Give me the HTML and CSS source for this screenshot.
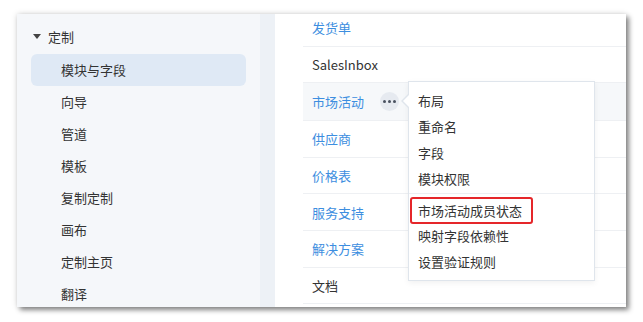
FILE: index.html
```html
<!DOCTYPE html>
<html lang="zh">
<head>
    <meta charset="UTF-8">
    <title>定制 - 模块与字段</title>
    <link rel="stylesheet" href="styles.css">
</head>
<body>
    <div class="frame">
        <div class="sidebar">
            <div class="side-head"><span class="caret"></span>定制</div>
            <div class="side-item selected">模块与字段</div>
            <div class="side-item">向导</div>
            <div class="side-item">管道</div>
            <div class="side-item">模板</div>
            <div class="side-item">复制定制</div>
            <div class="side-item">画布</div>
            <div class="side-item">定制主页</div>
            <div class="side-item">翻译</div>
        </div>
        <div class="strip"></div>
        <div class="main">
            <div class="module-list">
                <div class="row link">发货单</div>
                <div class="row">SalesInbox</div>
                <div class="row link active">
                    市场活动
                    <span class="dots"><i></i><i></i><i></i></span>
                    <div class="menu">
                        <div class="menu-item">布局</div>
                        <div class="menu-item">重命名</div>
                        <div class="menu-item">字段</div>
                        <div class="menu-item">模块权限</div>
                        <div class="menu-sep"></div>
                        <div class="menu-item"><span class="mark">市场活动成员状态</span></div>
                        <div class="menu-item">映射字段依赖性</div>
                        <div class="menu-item">设置验证规则</div>
                    </div>
                </div>
                <div class="row link">供应商</div>
                <div class="row link">价格表</div>
                <div class="row link">服务支持</div>
                <div class="row link">解决方案</div>
                <div class="row">文档</div>
            </div>
        </div>
    </div>
</body>
</html>
```

FILE: styles.css
```css
body {
    margin: 0;
    background: #fff;
    font-family: "Noto Sans CJK SC", "Noto Sans", sans-serif;
    font-size: 13px;
    color: #333;
}
.frame {
    margin: 14px 17px;
    width: 609px;
    height: 293px;
    display: flex;
    overflow: hidden;
    background: #fff;
    box-shadow: 3px 3px 5px rgba(0,0,0,0.45), 0 0 6px rgba(0,0,0,0.15);
}
.sidebar {
    width: 243px;
    flex-shrink: 0;
    background: #f5f7fa;
    padding: 6px 14px 0;
    box-sizing: border-box;
}
.side-head {
    height: 32px;
    display: flex;
    align-items: center;
    padding-left: 2px;
    margin-bottom: 2px;
    color: #333;
}
.caret {
    width: 0;
    height: 0;
    border-left: 4px solid transparent;
    border-right: 4px solid transparent;
    border-top: 5px solid #444;
    margin-right: 7px;
}
.side-item {
    height: 32px;
    line-height: 32px;
    padding-left: 30px;
    border-radius: 6px;
    color: #333;
}
.side-item.selected {
    background: #dfe9f5;
}
.strip {
    width: 15px;
    flex-shrink: 0;
    background: #edf1f6;
}
.main {
    flex: 1;
    padding-left: 28px;
}
.module-list {
    margin-top: -4px;
}
.row {
    height: 36.6px;
    box-sizing: border-box;
    border-bottom: 1px solid #eef0f3;
    padding-left: 9px;
    display: flex;
    align-items: center;
    color: #333;
}
.row.link {
    color: #3d8ee0;
}
.row.active {
    height: 38px;
    background: #f6f8fa;
    position: relative;
}
.dots {
    width: 19px;
    height: 19px;
    border-radius: 50%;
    background: #e6eaf0;
    margin-left: 16px;
    display: flex;
    align-items: center;
    justify-content: center;
    gap: 2px;
}
.dots i {
    width: 3px;
    height: 3px;
    border-radius: 50%;
    background: #4a5260;
}
.menu {
    position: absolute;
    left: 105px;
    top: -2px;
    width: 187px;
    box-sizing: border-box;
    padding: 6px 0 5px;
    background: #fff;
    border: 1px solid #dfe5ec;
    box-shadow: 0 2px 6px rgba(0,0,0,0.06);
    color: #333;
}
.menu::before {
    content: "";
    position: absolute;
    left: -8px;
    top: 12px;
    border-top: 7px solid transparent;
    border-bottom: 7px solid transparent;
    border-right: 7px solid #dfe5ec;
}
.menu::after {
    content: "";
    position: absolute;
    left: -6px;
    top: 13px;
    border-top: 6px solid transparent;
    border-bottom: 6px solid transparent;
    border-right: 6px solid #fff;
}
.menu-item {
    height: 26px;
    line-height: 26px;
    padding-left: 9px;
}
.menu-sep {
    height: 1px;
    background: #eceff3;
    margin: 1px 0 3px;
}
.mark {
    display: inline-block;
    height: 27px;
    line-height: 23px;
    box-sizing: border-box;
    border: 2px solid #e5262a;
    border-radius: 3px;
    padding: 0 9px 0 6px;
    margin-left: -8px;
}
```
